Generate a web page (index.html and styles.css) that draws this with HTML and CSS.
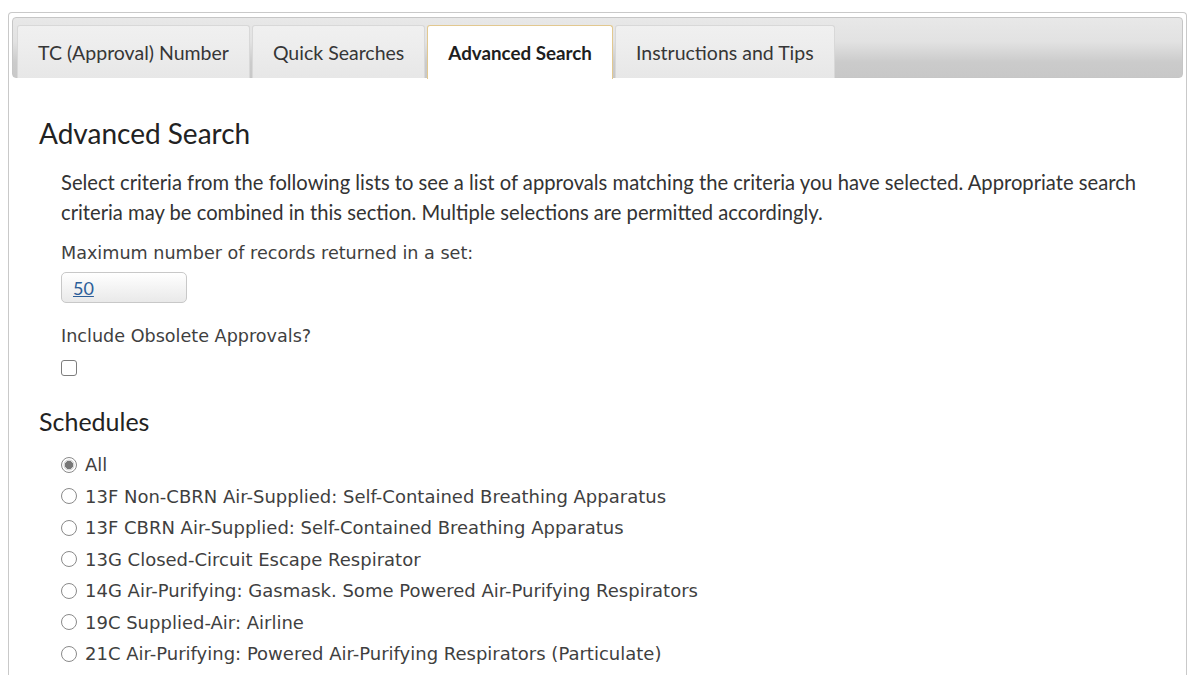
FILE: index.html
```html
<!DOCTYPE html>
<html lang="en">
<head>
<meta charset="utf-8">
<title>Advanced Search</title>
<link rel="stylesheet" href="styles.css">
</head>
<body>
<div class="panel">
  <ul class="tabbar">
    <li class="tab">TC (Approval) Number</li>
    <li class="tab">Quick Searches</li>
    <li class="tab active">Advanced Search</li>
    <li class="tab">Instructions and Tips</li>
  </ul>
  <div class="content">
    <h2 class="heading">Advanced Search</h2>
    <div class="section">
      <p class="intro">Select criteria from the following lists to see a list of approvals matching the criteria you have selected. Appropriate search criteria may be combined in this section. Multiple selections are permitted accordingly.</p>
      <div class="label">Maximum number of records returned in a set:</div>
      <div class="select"><a class="select-link" href="#">50</a></div>
      <div class="label label-obsolete">Include Obsolete Approvals?</div>
      <input class="check" type="checkbox">
    </div>
    <h3 class="heading heading-sched">Schedules</h3>
    <ul class="radios">
      <li class="radio-row"><input class="radio" type="radio" name="s" checked><span>All</span></li>
      <li class="radio-row"><input class="radio" type="radio" name="s"><span>13F Non-CBRN Air-Supplied: Self-Contained Breathing Apparatus</span></li>
      <li class="radio-row"><input class="radio" type="radio" name="s"><span>13F CBRN Air-Supplied: Self-Contained Breathing Apparatus</span></li>
      <li class="radio-row"><input class="radio" type="radio" name="s"><span>13G Closed-Circuit Escape Respirator</span></li>
      <li class="radio-row"><input class="radio" type="radio" name="s"><span>14G Air-Purifying: Gasmask. Some Powered Air-Purifying Respirators</span></li>
      <li class="radio-row"><input class="radio" type="radio" name="s"><span>19C Supplied-Air: Airline</span></li>
      <li class="radio-row"><input class="radio" type="radio" name="s"><span>21C Air-Purifying: Powered Air-Purifying Respirators (Particulate)</span></li>
      <li class="radio-row"><input class="radio" type="radio" name="s"><span>23C Air-Purifying: Chemical Cartridge Respirators with Particulate Filters</span></li>
    </ul>
  </div>
</div>
</body>
</html>
```
FILE: styles.css
```css
html, body {
  margin: 0;
  padding: 0;
  background: #ffffff;
}
body {
  font-family: Lato, "Open Sans", sans-serif;
  color: #333;
  overflow: hidden;
  height: 675px;
}
.panel {
  margin: 12px 13px 0 8px;
  border: 1px solid #c9c9c9;
  border-bottom: none;
  border-radius: 4px 4px 0 0;
  padding: 4px 3px 0 3px;
  height: 700px;
}
.tabbar {
  list-style: none;
  margin: 0;
  padding: 6px 0 0 4px;
  height: 53px;
  display: flex;
  gap: 2px;
  align-items: flex-end;
  border: 1px solid #c6c6c6;
  border-radius: 4px;
  background: linear-gradient(#e8e8e8, #e2e2e2 40%, #cbcbcb 75%, #c8c8c8);
}
.tab {
  height: 53px;
  box-sizing: border-box;
  padding: 0 20px;
  display: flex;
  align-items: center;
  font-size: 19.5px;
  color: #363636;
  background: linear-gradient(#f0f0f0, #ededed 40%, #e7e7e7);
  border: 1px solid #d8d8d8;
  border-bottom: none;
  border-radius: 3px 3px 0 0;
  margin-bottom: -1px;
}
.tab.active {
  background: #fff;
  color: #1e1e1e;
  font-weight: 700;
  font-size: 18.8px;
  border: 1px solid #e2c88f;
  border-bottom: none;
  height: 54px;
  margin-bottom: -2px;
}
.content {
  padding: 0 0 0 27px;
}
.heading {
  margin: 38px 0 0 0;
  font-size: 28px;
  font-weight: 400;
  color: #222;
  line-height: 34px;
}
.heading-sched {
  margin-top: 28px;
  font-size: 25px;
}
.section {
  padding-left: 22px;
}
.intro {
  margin: 17px 0 0 0;
  max-width: 1110px;
  font-size: 20.2px;
  line-height: 30px;
  color: #333;
}
.label {
  font-family: "DejaVu Sans", Verdana, sans-serif;
  font-size: 17.6px;
  color: #3f3f3f;
  margin-top: 15px;
  line-height: 22px;
}
.label-obsolete {
  margin-top: 22px;
}
.select {
  margin-top: 8px;
  width: 126px;
  height: 31px;
  box-sizing: border-box;
  border: 1px solid #c8c8c8;
  border-radius: 5px;
  background: linear-gradient(#ffffff, #f5f5f5 45%, #e9e9e9);
  padding: 0 0 0 11px;
  display: flex;
  align-items: center;
}
.select-link {
  font-size: 18px;
  color: #2c5e99;
  text-decoration: underline;
}
.check {
  -webkit-appearance: none;
  appearance: none;
  width: 16px;
  height: 16px;
  margin: 13px 0 0 0;
  border: 1px solid #7d7d7d;
  border-radius: 3px;
  background: #fff;
  display: block;
}
.radios {
  list-style: none;
  margin: 11px 0 0 0;
  padding: 0 0 0 22px;
}
.radio-row {
  display: flex;
  align-items: center;
  height: 31.5px;
  font-family: "DejaVu Sans", Verdana, sans-serif;
  font-size: 18px;
  color: #3f3f3f;
}
.radio {
  -webkit-appearance: none;
  appearance: none;
  width: 16px;
  height: 16px;
  box-sizing: border-box;
  margin: 0 8px 0 0;
  border: 1px solid #8a8a8a;
  border-radius: 50%;
  background: #fff;
  flex: none;
}
.radio:checked {
  background: radial-gradient(circle, #777 0 3.8px, #d8d8d8 4.3px 5.2px, #fff 5.8px);
}
```
